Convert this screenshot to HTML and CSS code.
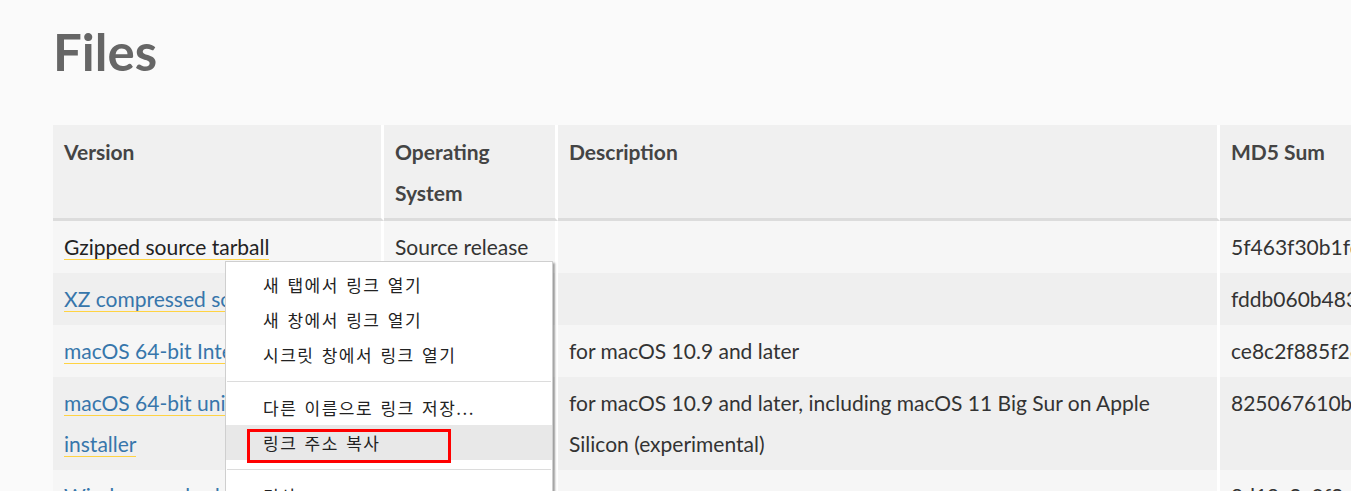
FILE: index.html
```html
<!DOCTYPE html>
<html lang="en">
<head>
<meta charset="utf-8">
<title>Files</title>
<link rel="stylesheet" href="styles.css">
</head>
<body>
<main class="page">
  <h1 class="title">Files</h1>
  <table class="files">
    <colgroup>
      <col class="c1"><col class="c2"><col class="c3"><col class="c4">
    </colgroup>
    <thead>
      <tr>
        <th>Version</th>
        <th>Operating System</th>
        <th>Description</th>
        <th>MD5 Sum</th>
      </tr>
    </thead>
    <tbody>
      <tr>
        <td><a class="link hover" href="#">Gzipped source tarball</a></td>
        <td>Source release</td>
        <td></td>
        <td>5f463f30b1fdcb545f156583630318b3</td>
      </tr>
      <tr>
        <td><a class="link" href="#">XZ compressed source tarball</a></td>
        <td>Source release</td>
        <td></td>
        <td>fddb060b483bc01850a3f412eea1d954</td>
      </tr>
      <tr>
        <td><a class="link" href="#">macOS 64-bit Intel installer</a></td>
        <td>macOS</td>
        <td>for macOS 10.9 and later</td>
        <td>ce8c2f885f26c0d3e5b8a4c5e8f1d7a2</td>
      </tr>
      <tr>
        <td><a class="link" href="#">macOS 64-bit universal2<br>installer</a></td>
        <td>macOS</td>
        <td>for macOS 10.9 and later, including macOS 11 Big Sur on Apple<br>Silicon (experimental)</td>
        <td>825067610b1a7e3a9c7df0b2e54c1d8f</td>
      </tr>
      <tr>
        <td><a class="link" href="#">Windows embeddable package (32-bit)</a></td>
        <td>Windows</td>
        <td></td>
        <td>9d19c2c0f3a1be6e80a2f9c1d7b4e5a6</td>
      </tr>
    </tbody>
  </table>
</main>

<div class="menu">
  <div class="item">새 탭에서 링크 열기</div>
  <div class="item">새 창에서 링크 열기</div>
  <div class="item">시크릿 창에서 링크 열기</div>
  <div class="sep"></div>
  <div class="item">다른 이름으로 링크 저장...</div>
  <div class="item active">링크 주소 복사<span class="mark"></span></div>
  <div class="sep"></div>
  <div class="item">검사</div>
</div>
</body>
</html>
```

FILE: styles.css
```css
html, body {
  margin: 0;
  padding: 0;
  background: #fafafa;
  overflow: hidden;
  height: 491px;
}

.page {
  padding: 17px 0 0 53px;
  font-family: "Lato", "Liberation Sans", sans-serif;
}

.title {
  margin: 0 0 38px 0;
  font-size: 51px;
  line-height: 70px;
  font-weight: 700;
  color: #666;
}

.files {
  border-collapse: separate;
  border-spacing: 0;
  table-layout: fixed;
  width: 1467px;
  font-size: 21px;
  color: #333;
}

.c1 { width: 331px; }
.c2 { width: 174px; }
.c3 { width: 662px; }
.c4 { width: 300px; }

.files th,
.files td {
  border-right: 3px solid #fff;
  text-align: left;
  vertical-align: top;
  line-height: 41px;
  white-space: nowrap;
  overflow: hidden;
}

.files th {
  background: #f0f0f0;
  padding: 6px 11px 5px 11px;
  font-weight: 700;
  color: #444;
  white-space: normal;
  border-bottom: 3px solid #dcdcdc;
}

.files td {
  padding: 5px 11px 6px 11px;
}

.files tbody tr:nth-child(odd) td { background: #f6f6f6; }
.files tbody tr:nth-child(even) td { background: #efefef; }

.link {
  color: #3776ab;
  text-decoration: none;
  border-bottom: 1px solid #ffd343;
}

.link.hover {
  color: #222;
}

.menu {
  position: absolute;
  left: 225px;
  top: 261px;
  width: 326px;
  padding-top: 5px;
  height: 260px;
  background: #fff;
  border: 1px solid #cfcfcf;
  box-shadow: 2px 2px 2px rgba(0, 0, 0, 0.35);
  font-family: "Noto Sans CJK KR", "Noto Sans", sans-serif;
  font-size: 17px;
  color: #222;
}

.item {
  position: relative;
  height: 35px;
  line-height: 35px;
  padding-left: 37px;
  letter-spacing: 1.5px;
  word-spacing: 2px;
}

.item.active {
  background: #e8e8e8;
}

.mark {
  position: absolute;
  left: 21px;
  top: 4px;
  width: 198px;
  height: 28px;
  border: 3px solid #ff0000;
}

.sep {
  height: 1px;
  margin: 9px 1px 8px 1px;
  background: #dcdcdc;
}
```
